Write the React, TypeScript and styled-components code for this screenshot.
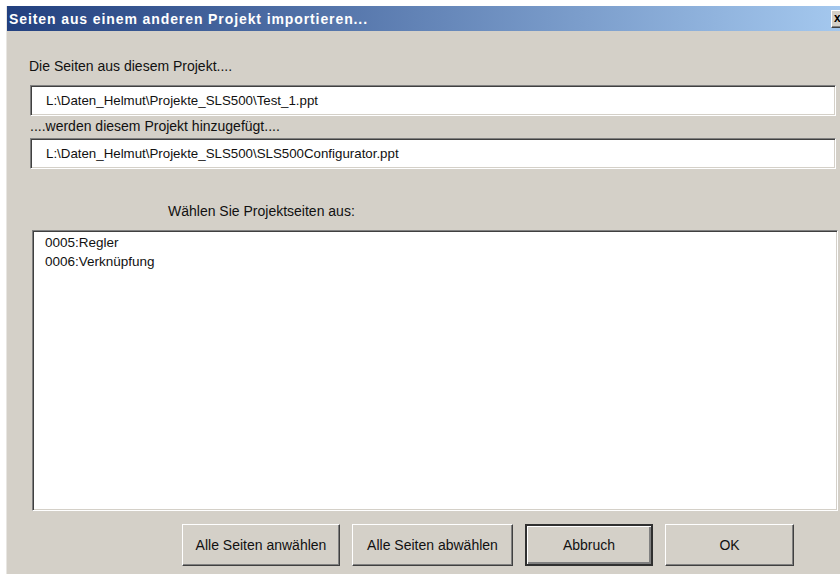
import React from "react";
import styled, { createGlobalStyle } from "styled-components";

const Global = createGlobalStyle`
  html, body {
    margin: 0;
    padding: 0;
    background: #ffffff;
    overflow: hidden;
  }
  body {
    font-family: "Liberation Sans", Arial, sans-serif;
  }
`;

const Window = styled.div`
  margin: 6px 0 0 6px;
  width: 846px;
  height: 568px;
  background: #d4d0c8;
  border-left: 1px solid #e8e6e2;
  display: flex;
  flex-direction: column;
`;

const TitleBar = styled.div`
  height: 25px;
  display: flex;
  align-items: center;
  justify-content: space-between;
  background: linear-gradient(to right, #22407f 0%, #a6caf0 100%);
  padding-left: 2px;
`;

const Title = styled.span`
  color: #ffffff;
  font-weight: bold;
  font-size: 14px;
  letter-spacing: 0.9px;
  white-space: nowrap;
`;

const CloseButton = styled.div`
  width: 18px;
  height: 18px;
  margin-right: 4px;
  box-sizing: border-box;
  background: #d4d0c8;
  border-top: 1px solid #ffffff;
  border-left: 1px solid #ffffff;
  border-right: 1px solid #404040;
  border-bottom: 1px solid #404040;
  box-shadow: inset -1px -1px 0 #808080;
  color: #000;
  font-size: 12px;
  font-weight: bold;
  line-height: 14px;
  padding-left: 2px;
`;

const Content = styled.div`
  flex: 1;
  display: flex;
  flex-direction: column;
  padding: 27px 0 0 23px;
`;

const Label = styled.div<{ $indent?: number; $gapTop?: number }>`
  font-size: 14px;
  line-height: 17px;
  color: #111;
  white-space: nowrap;
  margin-left: ${(p) => p.$indent ?? 0}px;
  margin-top: ${(p) => p.$gapTop ?? 0}px;
`;

const sunken = `
  box-sizing: border-box;
  background: #ffffff;
  border-top: 1px solid #808080;
  border-left: 1px solid #808080;
  border-right: 1px solid #ffffff;
  border-bottom: 1px solid #ffffff;
  box-shadow: inset 1px 1px 0 #404040, inset -1px -1px 0 #d4d0c8;
`;

const PathField = styled.div<{ $gapTop: number }>`
  ${sunken}
  width: 806px;
  height: 31px;
  margin-top: ${(p) => p.$gapTop}px;
  padding-left: 15px;
  display: flex;
  align-items: center;
  font-size: 13.3px;
  color: #111;
  white-space: nowrap;
`;

const ListBox = styled.div`
  ${sunken}
  width: 806px;
  height: 281px;
  margin: 10px 0 0 2px;
  padding: 2px 0 0 12px;
  display: flex;
  flex-direction: column;
`;

const ListItem = styled.div`
  font-size: 13.5px;
  line-height: 19px;
  color: #111;
  white-space: nowrap;
`;

const ButtonRow = styled.div`
  display: flex;
  gap: 12px;
  margin-top: 13px;
  padding-left: 152px;
`;

const Button = styled.div<{ $w: number; $default?: boolean }>`
  box-sizing: border-box;
  width: ${(p) => p.$w}px;
  height: 42px;
  display: flex;
  align-items: center;
  justify-content: center;
  background: #d4d0c8;
  font-size: 14px;
  color: #111;
  white-space: nowrap;
  border-top: 1px solid #ffffff;
  border-left: 1px solid #ffffff;
  border-right: 1px solid #404040;
  border-bottom: 1px solid #404040;
  box-shadow: inset -1px -1px 0 #808080;
  ${(p) =>
    p.$default &&
    `
    border: 2px solid #303030;
    box-shadow: inset 1px 1px 0 #ffffff, inset -2px -2px 0 #808080;
  `}
`;

export default function App() {
  return (
    <>
      <Global />
      <Window>
        <TitleBar>
          <Title>Seiten aus einem anderen Projekt importieren...</Title>
          <CloseButton>x</CloseButton>
        </TitleBar>
        <Content>
          <Label $indent={-1}>Die Seiten aus diesem Projekt....</Label>
          <PathField $gapTop={10}>L:\Daten_Helmut\Projekte_SLS500\Test_1.ppt</PathField>
          <Label $gapTop={2}>....werden diesem Projekt hinzugefügt....</Label>
          <PathField $gapTop={3}>
            L:\Daten_Helmut\Projekte_SLS500\SLS500Configurator.ppt
          </PathField>
          <Label $indent={138} $gapTop={34}>
            Wählen Sie Projektseiten aus:
          </Label>
          <ListBox>
            <ListItem>0005:Regler</ListItem>
            <ListItem>0006:Verknüpfung</ListItem>
          </ListBox>
          <ButtonRow>
            <Button $w={158}>Alle Seiten anwählen</Button>
            <Button $w={161}>Alle Seiten abwählen</Button>
            <Button $w={128} $default>
              Abbruch
            </Button>
            <Button $w={129}>OK</Button>
          </ButtonRow>
        </Content>
      </Window>
    </>
  );
}
